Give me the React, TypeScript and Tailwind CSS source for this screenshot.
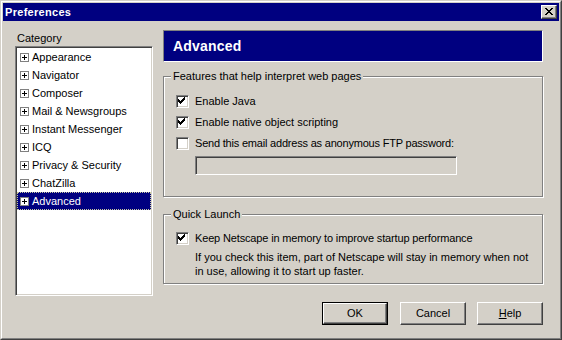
import React from "react";

const FONT = { fontFamily: '"Liberation Sans", Arial, sans-serif' };

function PlusBox() {
  return (
    <svg width="9" height="9" viewBox="0 0 9 9" shapeRendering="crispEdges" className="shrink-0">
      <rect x="0.5" y="0.5" width="8" height="8" fill="#fff" stroke="#808080" />
      <rect x="2" y="4" width="5" height="1" fill="#000" />
      <rect x="4" y="2" width="1" height="5" fill="#000" />
    </svg>
  );
}

function Check() {
  const cols = [3, 4, 5, 6, 7, 8, 9];
  const tops = [5, 6, 7, 6, 5, 4, 3];
  return (
    <svg width="13" height="13" viewBox="0 0 13 13" shapeRendering="crispEdges" className="absolute left-[-2px] top-[-2px]">
      {cols.map((c, i) => (
        <rect key={c} x={c} y={tops[i]} width="1" height="3" fill="#000" />
      ))}
    </svg>
  );
}

function Checkbox({ checked }: { checked?: boolean }) {
  return (
    <div className="relative w-[13px] h-[13px] shrink-0 bg-white border border-t-[#808080] border-l-[#808080] border-b-white border-r-white shadow-[inset_1px_1px_0_#404040,inset_-1px_-1px_0_#d4d0c8]">
      {checked && <Check />}
    </div>
  );
}

function CloseX() {
  const rows = [
    [0, 1, 6, 7],
    [1, 2, 5, 6],
    [2, 3, 4, 5],
    [3, 4],
    [2, 3, 4, 5],
    [1, 2, 5, 6],
    [0, 1, 6, 7],
  ];
  return (
    <svg width="8" height="7" viewBox="0 0 8 7" shapeRendering="crispEdges">
      {rows.map((r, y) => r.map((x) => <rect key={`${x}-${y}`} x={x} y={y} width="1" height="1" fill="#000" />))}
    </svg>
  );
}

function Button({ children, isDefault, className = "" }: { children: React.ReactNode; isDefault?: boolean; className?: string }) {
  const inner = (
    <div className="flex-1 flex items-center justify-center bg-[#d4d0c8] border border-t-white border-l-white border-b-[#404040] border-r-[#404040] shadow-[inset_-1px_-1px_0_#808080] text-[11px] text-black">
      {children}
    </div>
  );
  if (isDefault) {
    return <div className={`flex h-[23px] w-[66px] border border-black ${className}`}>{inner}</div>;
  }
  return <div className={`flex h-[23px] w-[66px] ${className}`}>{inner}</div>;
}

function GroupBox({ label, className = "", children }: { label: string; className?: string; children: React.ReactNode }) {
  return (
    <div className={`relative border border-[#808080] shadow-[inset_1px_1px_0_#fff,1px_1px_0_#fff] ${className}`}>
      <div className="absolute left-[7px] top-[-8px] bg-[#d4d0c8] px-[2px] text-[11px] leading-[14px] text-black">{label}</div>
      {children}
    </div>
  );
}

const categories = [
  "Appearance",
  "Navigator",
  "Composer",
  "Mail & Newsgroups",
  "Instant Messenger",
  "ICQ",
  "Privacy & Security",
  "ChatZilla",
  "Advanced",
];

export default function App() {
  return (
    <div style={FONT} className="w-[562px] h-[340px] bg-[#d4d0c8] text-black text-[11px]">
      <div className="w-full h-full border border-t-[#d4d0c8] border-l-[#d4d0c8] border-b-[#404040] border-r-[#404040]">
        <div className="w-full h-full border border-t-white border-l-white border-b-[#808080] border-r-[#808080] p-px flex flex-col">
          {/* Title bar */}
          <div className="h-[18px] bg-[#000080] flex items-start justify-between pl-[2px] pr-[2px]">
            <div className="text-white font-bold text-[11px] leading-[18px] tracking-[0.3px]">Preferences</div>
            <div className="mt-[2px] w-[16px] h-[14px] flex bg-[#d4d0c8] border border-t-white border-l-white border-b-[#404040] border-r-[#404040] shadow-[inset_-1px_-1px_0_#808080] items-center justify-center">
              <div className="mb-px mr-px">
                <CloseX />
              </div>
            </div>
          </div>

          {/* Body */}
          <div className="flex pl-[12px] pt-[9px]">
            {/* Left column */}
            <div className="flex flex-col w-[138px]">
              <div className="h-[16px] leading-[16px] pl-[2px]">Category</div>
              <div className="h-[250px] bg-white border border-t-[#808080] border-l-[#808080] border-b-white border-r-white shadow-[inset_1px_1px_0_#404040,inset_-1px_-1px_0_#d4d0c8] p-px">
                {categories.map((c) => {
                  const sel = c === "Advanced";
                  return (
                    <div
                      key={c}
                      className={`h-[18px] flex items-center ${
                        sel ? "bg-[#000080] text-white border border-dotted border-[#c8c8a0]" : "border border-transparent"
                      }`}
                    >
                      <div className="ml-[2px]">
                        <PlusBox />
                      </div>
                      <span className="ml-[3px] leading-[16px]">{c}</span>
                    </div>
                  );
                })}
              </div>
            </div>

            {/* Right column */}
            <div className="ml-[10px] w-[380px] flex flex-col">
              <div className="h-[32px] bg-[#000080] border border-t-[#808080] border-l-[#808080] border-b-white border-r-white flex items-center pl-[9px]">
                <span className="text-white font-bold text-[14px] tracking-[0.2px]">Advanced</span>
              </div>

              <GroupBox label="Features that help interpret web pages" className="mt-[14px] h-[121px]">
                <div className="pl-[12px] pt-[18px] flex flex-col">
                  <div className="flex flex-col gap-[8px]">
                    <div className="flex items-center h-[13px]">
                      <Checkbox checked />
                      <span className="ml-[6px]">Enable Java</span>
                    </div>
                    <div className="flex items-center h-[13px]">
                      <Checkbox checked />
                      <span className="ml-[6px]">Enable native object scripting</span>
                    </div>
                    <div className="flex items-center h-[13px]">
                      <Checkbox />
                      <span className="ml-[6px] tracking-[-0.2px]">Send this email address as anonymous FTP password:</span>
                    </div>
                  </div>
                  <div className="ml-[19px] mt-[6px] w-[262px] h-[19px] bg-[#d4d0c8] border border-t-[#808080] border-l-[#808080] border-b-white border-r-white shadow-[inset_1px_1px_0_#404040,inset_-1px_-1px_0_#d4d0c8]" />
                </div>
              </GroupBox>

              <GroupBox label="Quick Launch" className="mt-[17px] h-[70px]">
                <div className="pl-[12px] pt-[17px] flex flex-col">
                  <div className="flex items-center h-[13px]">
                    <Checkbox checked />
                    <span className="ml-[6px] tracking-[-0.15px]">Keep Netscape in memory to improve startup performance</span>
                  </div>
                  <div className="ml-[19px] mt-[5px] leading-[14px]">
                    If you check this item, part of Netscape will stay in memory when not
                    <br />
                    in use, allowing it to start up faster.
                  </div>
                </div>
              </GroupBox>

              <div className="mt-[18px] flex justify-end">
                <Button isDefault>OK</Button>
                <Button className="ml-[12px]">Cancel</Button>
                <Button className="ml-[11px]">
                  <span>
                    <span className="underline">H</span>elp
                  </span>
                </Button>
              </div>
            </div>
          </div>
        </div>
      </div>
    </div>
  );
}
